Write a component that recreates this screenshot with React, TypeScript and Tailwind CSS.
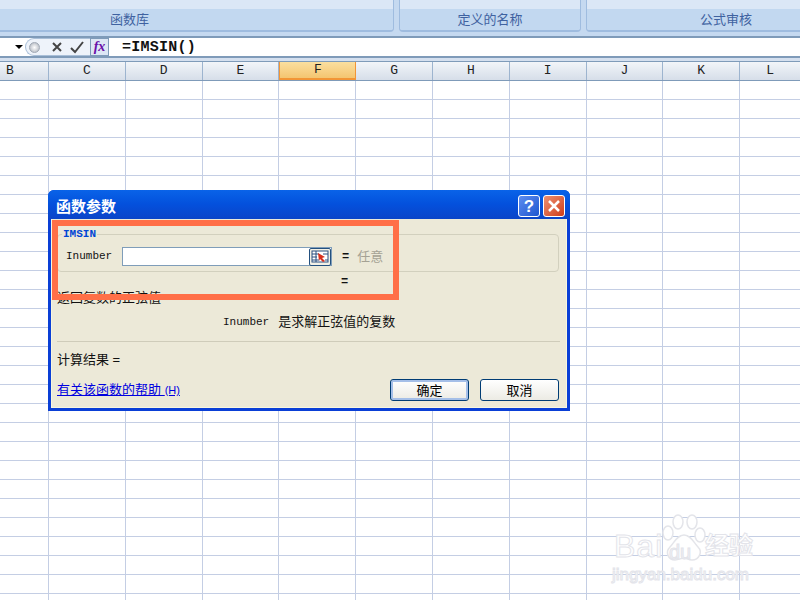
const columns = ["C", "D", "E", "F", "G", "H", "I", "J", "K"];
const rows = Array.from({ length: 28 }, (_, index) => index);
const cjk = "font-['Liberation_Sans','Noto_Sans_CJK_SC',sans-serif]";
const mono = "font-['Liberation_Mono','Noto_Sans_CJK_SC',monospace]";

const RibbonGroup = ({ label, className }: { label: string; className: string }) => (
  <div className={`flex h-[32px] flex-col overflow-hidden rounded-b-[4px] border-x border-b-2 border-[#9fbcdf] ${className}`}>
    <div className="h-[9px] bg-[#dbe7f6]" />
    <div className="flex flex-1 items-center justify-center bg-[#c2d8f0] text-[13px] text-[#3f62a0]">
      <span className={cjk}>{label}</span>
    </div>
  </div>
);

const FormulaBar = () => (
  <div className="flex h-[22px] items-center border-y-2 border-[#7f9bb9] bg-white">
    <div className="ml-[15px] h-0 w-0 border-x-[4px] border-t-[4px] border-x-transparent border-t-black" />
    <div className="ml-[2px] flex h-[18px] w-[65px] items-center rounded-l-full border border-r-0 border-[#a9bfd8] bg-[#eef3fa] pl-[3px]">
      <div className="h-[11px] w-[11px] rounded-full border border-[#a0a8b4] bg-[radial-gradient(circle,#ffffff,#a8aeb8)]" />
      <svg width="14" height="14" viewBox="0 0 14 14" className="ml-[10px]">
        <path d="M3 3l8 8M11 3l-8 8" stroke="#444" strokeWidth="2" fill="none" />
      </svg>
      <svg width="16" height="14" viewBox="0 0 16 14" className="ml-[5px]">
        <path d="M2 8l4 4 8-10" stroke="#444" strokeWidth="2" fill="none" />
      </svg>
    </div>
    <div className="flex h-[18px] w-[19px] items-center justify-center border border-[#7f9bb9] bg-[#dde7f5] font-['Liberation_Serif',serif] text-[14px] font-bold italic leading-none text-[#6a10a8]">
      fx
    </div>
    <div className={`ml-[13px] pt-[2px] text-[15px] font-bold tracking-[0.25px] text-[#111] ${mono}`}>=IMSIN()</div>
  </div>
);

const SheetGrid = () => (
  <div>
    <div className={`flex h-[20px] border-y border-[#7f9bb9] text-[13px] text-[#222] ${mono}`}>
      <div className="flex w-[49px] shrink-0 items-center border-r border-[#9db4cf] bg-gradient-to-b from-[#f2f5f9] to-[#d6dee9] pl-[6px]">
        B
      </div>
      {columns.map((column) => (
        <div
          key={column}
          className={
            column === "F"
              ? "flex w-[76.8px] shrink-0 items-center justify-center border-x border-b-2 border-[#f29536] bg-gradient-to-b from-[#fbdf9f] to-[#f4c570]"
              : "flex w-[76.8px] shrink-0 items-center justify-center border-r border-[#9db4cf] bg-gradient-to-b from-[#f2f5f9] to-[#d6dee9]"
          }
        >
          {column}
        </div>
      ))}
      <div className="flex flex-1 items-center justify-center bg-gradient-to-b from-[#f2f5f9] to-[#d6dee9]">L</div>
    </div>
    {rows.map((row) => (
      <div key={row} className="flex h-[19px] border-b border-[#c4cee4] bg-white">
        <div className="w-[49px] shrink-0 border-r border-[#c4cee4]" />
        {columns.map((column) => (
          <div key={column} className="w-[76.8px] shrink-0 border-r border-[#c4cee4]" />
        ))}
      </div>
    ))}
  </div>
);

const RefButton = () => (
  <div className="flex h-[18px] w-[22px] items-center justify-center rounded-[2px] border border-[#23507f] bg-[#f2f0e6]">
    <svg width="18" height="13" viewBox="0 0 18 13">
      <rect x="1" y="1" width="16" height="11" fill="#fff" stroke="#2b4f7f" />
      <path d="M1 4h7M1 7h5M1 10h7M5 1v11M12 4h5M14 10h3" stroke="#2b4f7f" fill="none" />
      <path d="M7 3l7 4-3 1 3 3-2 1-3-3-1 2z" fill="#d8301c" />
    </svg>
  </div>
);

const DialogButton = ({ label, isDefault }: { label: string; isDefault?: boolean }) => (
  <div
    className={`flex h-[22px] w-[79px] items-center justify-center rounded-[3px] border border-[#003c74] bg-gradient-to-b from-white to-[#ecebe4] text-[13px] leading-none text-black ${cjk} ${
      isDefault ? "shadow-[inset_0_0_0_2px_#a5bfe8]" : ""
    }`}
  >
    {label}
  </div>
);

const ArgumentsDialog = () => (
  <div className="absolute left-[48px] top-[190px] h-[221px] w-[522px] overflow-hidden rounded-t-[6px] bg-[#0a3fd6]">
    <div className="flex h-[29px] items-center justify-between bg-gradient-to-b from-[#0a63e8] via-[#0450dc] to-[#0a44c8] pl-[8px] pr-[5px] pt-[3px]">
      <span className={`text-[15px] font-bold leading-none text-white ${cjk}`}>函数参数</span>
      <div className="flex gap-[3px]">
        <div className="flex h-[22px] w-[22px] items-center justify-center rounded-[3px] border border-white bg-gradient-to-br from-[#5d8df0] to-[#1f55cf] font-['Liberation_Sans',sans-serif] text-[17px] font-bold leading-none text-white">
          ?
        </div>
        <div className="flex h-[22px] w-[22px] items-center justify-center rounded-[3px] border border-white bg-gradient-to-br from-[#ec8f70] to-[#cf3a14]">
          <svg width="14" height="14" viewBox="0 0 14 14">
            <path d="M2 2l10 10M12 2L2 12" stroke="#fff" strokeWidth="2.5" fill="none" />
          </svg>
        </div>
      </div>
    </div>
    <div className="mx-[3px] h-[189px] border-x border-b border-[#f8f6df] bg-[#ece9d8] px-[5px] pt-px">
      <div className="relative mt-[14px] h-[38px] w-[502px] rounded-[4px] border border-[#d2d0be]">
        <span className={`absolute -top-[6px] left-[4px] bg-[#ece9d8] px-px text-[11px] font-bold leading-none text-[#0046d5] ${mono}`}>
          IMSIN
        </span>
        <div className="flex h-full items-center pl-[8px] pt-[7px]">
          <span className={`w-[56px] text-[11px] text-[#111] ${mono}`}>Inumber</span>
          <div className="flex h-[19px] w-[210px] items-center justify-end border border-[#7f9db9] bg-white">
            <RefButton />
          </div>
          <span className={`ml-[10px] text-[12px] font-bold text-[#111] ${mono}`}>=</span>
          <span className={`ml-[8px] text-[13px] leading-none text-[#a5a294] ${cjk}`}>任意</span>
        </div>
      </div>
      <div className={`mt-[4px] pl-[284px] text-[12px] font-bold leading-none text-[#111] ${mono}`}>=</div>
      <div className={`mt-[3px] text-[13px] leading-[14px] text-[#111] ${cjk}`}>返回复数的正弦值</div>
      <div className={`mt-[10px] flex items-center pl-[166px] text-[13px] leading-[14px] text-[#111] ${cjk}`}>
        <span className={`text-[11px] ${mono}`}>Inumber</span>
        <span className="ml-[9px]">是求解正弦值的复数</span>
      </div>
      <div className="mt-[12px] h-px w-[503px] bg-[#cfccba]" />
      <div className={`mt-[11px] text-[13px] leading-[14px] text-[#111] ${cjk}`}>计算结果 =</div>
      <div className="mt-[12px] flex items-center justify-between pr-[2px]">
        <span className={`text-[13px] leading-[14px] text-[#0000e0] underline ${cjk}`}>
          有关该函数的帮助 <span className="text-[11px]">(H)</span>
        </span>
        <div className="flex gap-[11px]">
          <DialogButton label="确定" isDefault />
          <DialogButton label="取消" />
        </div>
      </div>
    </div>
  </div>
);

const Watermark = () => (
  <div className="pointer-events-none absolute left-[612px] top-[513px] h-[70px] w-[150px] select-none text-white [-webkit-text-stroke:1px_#e3e4ea]">
    <svg width="62" height="52" viewBox="0 0 62 52" className="absolute left-[44px] top-0">
      <g fill="#ffffff" stroke="#e4e5ea" strokeWidth="1.5">
        <ellipse cx="12" cy="20" rx="5" ry="7" />
        <ellipse cx="22" cy="9" rx="5" ry="7" />
        <ellipse cx="36" cy="9" rx="5" ry="7" />
        <ellipse cx="44" cy="22" rx="5" ry="7" />
        <path d="M28 22c7 0 10 8 14 12 5 5 1 13-6 13-4 0-5-2-8-2s-5 2-9 2c-7 0-10-8-5-13 4-4 7-12 14-12z" />
      </g>
    </svg>
    <span className="absolute left-[2px] top-[17px] font-['Liberation_Sans',sans-serif] text-[32px] leading-none tracking-[1px]">
      Bai
    </span>
    <span className="absolute left-[57px] top-[29px] font-['Liberation_Sans',sans-serif] text-[20px] leading-none text-[#f2f2f5]">
      du
    </span>
    <span className={`absolute left-[93px] top-[21px] text-[24px] font-bold leading-none ${cjk}`}>经验</span>
    <span className="absolute left-0 top-[53px] font-['Liberation_Sans',sans-serif] text-[17px] leading-none">
      jingyan.baidu.com
    </span>
  </div>
);

export default function App() {
  return (
    <div className="relative h-[600px] w-[800px] overflow-hidden bg-[#c5d9f0]">
      <div className="flex h-[32px] gap-[5px]">
        <RibbonGroup label="函数库" className="-ml-[135px] w-[529px] shrink-0" />
        <RibbonGroup label="定义的名称" className="w-[182px] shrink-0" />
        <RibbonGroup label="公式审核" className="w-[280px] shrink-0" />
      </div>
      <div className="h-[4px]" />
      <FormulaBar />
      <div className="h-[3px] bg-[#d5e0ef]" />
      <SheetGrid />
      <ArgumentsDialog />
      <div className="absolute left-[52px] top-[220px] h-[80px] w-[347px] border-[6px] border-[#ff6f47]" />
      <Watermark />
    </div>
  );
}
